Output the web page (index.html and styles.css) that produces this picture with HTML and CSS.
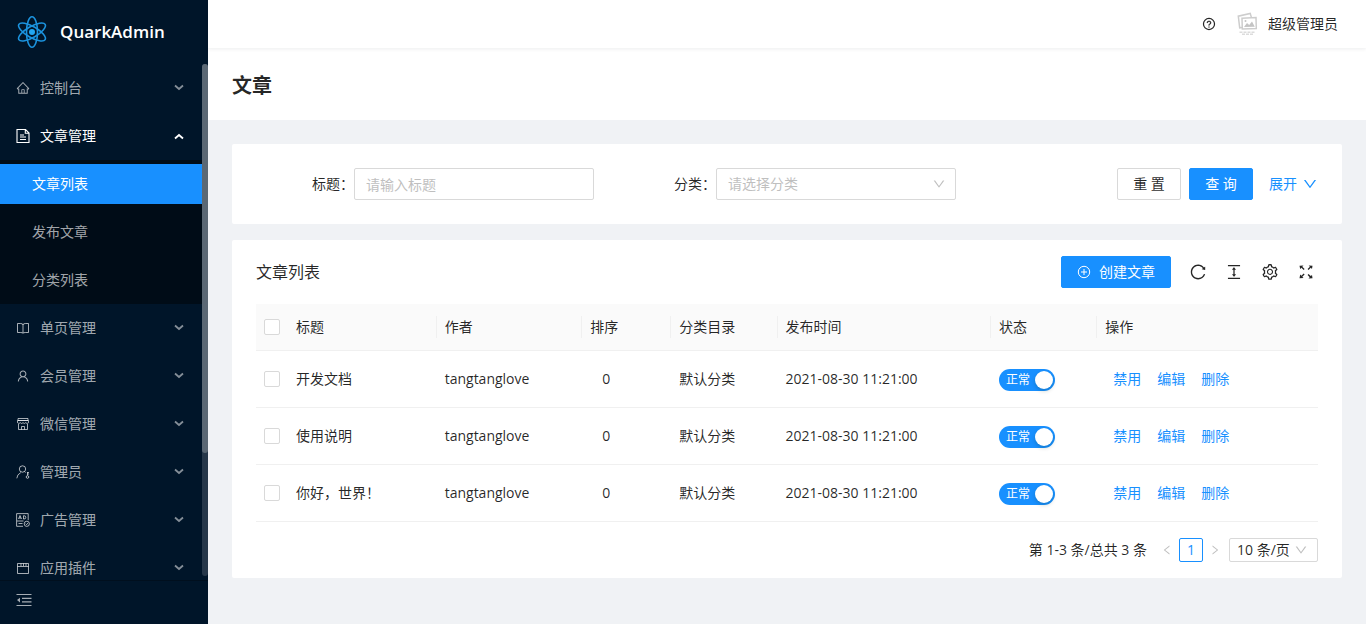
FILE: index.html
```html
<!DOCTYPE html>
<html lang="zh-CN">
<head>
<meta charset="utf-8">
<meta name="viewport" content="width=device-width, initial-scale=1">
<title>文章 - QuarkAdmin</title>
<link rel="stylesheet" href="styles.css">
</head>
<body>
<svg class="sprite" aria-hidden="true">
  <symbol id="i-down" viewBox="0 0 1024 1024"><path d="M884 256h-75c-5.100 0-9.900 2.500-12.900 6.600L512 654.200 227.900 262.600c-3-4.100-7.800-6.600-12.900-6.600h-75c-6.500 0-10.300 7.400-6.500 12.700l352.600 486.100c12.800 17.600 39 17.600 51.700 0l352.600-486.100c3.900-5.300.1-12.700-6.400-12.700z"/></symbol>
  <symbol id="i-left" viewBox="0 0 1024 1024"><path d="M724 218.300V141c0-6.700-7.700-10.400-12.900-6.300L260.300 486.800a31.860 31.860 0 0 0 0 50.300l450.800 352.100c5.300 4.100 12.900.4 12.900-6.300v-77.300c0-4.900-2.300-9.600-6.100-12.600l-360-281 360-281.100c3.800-3 6.100-7.700 6.100-12.600z"/></symbol>
  <symbol id="i-chevron" viewBox="0 0 10 10"><path d="M1 2.500l4 3.500L9 2.500" fill="none" stroke="currentColor" stroke-width="1.800"/></symbol>
</svg>
<div class="app">
  <aside class="sider">
    <a class="brand" href="#">
      <svg class="brand-logo" viewBox="0 0 32 32" fill="none" stroke="#1b93de" stroke-width="1.600">
        <ellipse cx="16" cy="16" rx="5.500" ry="15.200"/>
        <ellipse cx="16" cy="16" rx="5.500" ry="15.200" transform="rotate(60 16 16)"/>
        <ellipse cx="16" cy="16" rx="5.500" ry="15.200" transform="rotate(-60 16 16)"/>
        <circle cx="16" cy="16" r="3" fill="#22a7f2" stroke="none"/>
      </svg>
      <span class="brand-name">QuarkAdmin</span>
    </a>
    <div class="menu-area">
      <nav class="menu">
        <a class="menu-item" href="#">
          <svg class="icon" viewBox="0 0 1024 1024"><path d="M946.500 505L534.200 92.900a31.500 31.500 0 0 0-44.400 0L77.500 505a63.900 63.900 0 0 0-18.800 46c.4 35.200 29.700 63.300 64.900 63.300h42.500V940h691.800V614.300h43.400c17.100 0 33.200-6.700 45.300-18.800a63.600 63.600 0 0 0 18.700-45.300c0-17-6.700-33.100-18.800-45.200zM568 868H456V664h112v204zm217.900-325.700V868H632V640c0-22.100-17.900-40-40-40H432c-22.100 0-40 17.900-40 40v228H238.100V542.300h-96l370-369.700 369.900 369.700h-96.100z"/></svg>
          <span>控制台</span><svg class="arrow"><use href="#i-chevron"/></svg></a>
        <a class="menu-item is-open" href="#">
          <svg class="icon line" viewBox="0 0 14 14"><path d="M1 .500h8.500l3.500 3.500v9.500H1zM9.300.600v3.700H13M4 6h4M4 8h6M4 10.500h6" stroke-width="1.100"/></svg>
          <span>文章管理</span><svg class="arrow"><use href="#i-chevron"/></svg></a>
        <div class="submenu">
          <a class="submenu-item is-selected" href="#">文章列表</a>
          <a class="submenu-item" href="#">发布文章</a>
          <a class="submenu-item" href="#">分类列表</a>
        </div>
        <a class="menu-item" href="#">
          <svg class="icon line" viewBox="0 0 14 14"><path d="M1.500 2.500h3.200q2.300 0 2.300 1.500 0-1.500 2.300-1.500h3.200v9H9.300Q7.500 11.500 7 12.400q-.5-.9-2.300-.9H1.500zM7 4v8"/></svg>
          <span>单页管理</span><svg class="arrow"><use href="#i-chevron"/></svg></a>
        <a class="menu-item" href="#">
          <svg class="icon" viewBox="0 0 1024 1024"><path d="M858.500 763.600a374 374 0 0 0-80.600-119.500 375.630 375.630 0 0 0-119.500-80.600c-.4-.2-.8-.3-1.200-.5C719.500 518 760 444.700 760 362c0-137-111-248-248-248S264 225 264 362c0 82.700 40.500 156 102.800 201.100-.4.2-.8.3-1.200.5-44.800 18.900-85 46-119.500 80.600a375.630 375.630 0 0 0-80.600 119.500A371.700 371.700 0 0 0 136 901.800a8 8 0 0 0 8 8.200h60c4.400 0 7.900-3.500 8-7.800 2-77.200 33-149.500 87.800-204.300 56.700-56.700 132-87.900 212.200-87.900s155.500 31.200 212.200 87.900C779 752.700 810 825 812 902.200c.1 4.400 3.600 7.800 8 7.800h60a8 8 0 0 0 8-8.200c-1-47.800-10.900-94.300-29.500-138.200zM512 534c-45.900 0-89.100-17.900-121.600-50.400S340 407.900 340 362c0-45.900 17.900-89.100 50.400-121.600S466.100 190 512 190s89.100 17.900 121.600 50.400S684 316.100 684 362c0 45.900-17.900 89.100-50.400 121.600S557.900 534 512 534z"/></svg>
          <span>会员管理</span><svg class="arrow"><use href="#i-chevron"/></svg></a>
        <a class="menu-item" href="#">
          <svg class="icon line" viewBox="0 0 14 14"><path d="M2 1.500h10v2H2zM1.500 3.500h11v2.200q-1.400 1.600-2.800 0-1.400 1.600-2.700 0-1.400 1.600-2.700 0-1.400 1.600-2.800 0zM2.500 7v5.500h9V7M5.500 12.500v-3h3v3"/></svg>
          <span>微信管理</span><svg class="arrow"><use href="#i-chevron"/></svg></a>
        <a class="menu-item" href="#">
          <svg class="icon line" viewBox="0 0 14 14"><circle cx="6.500" cy="4" r="3.200"/><path d="M.8 13.300q.3-4 4-5.700M8.500 6.600l1 1M11.500 7v3.500M11.500 7.500H13M11.500 9H13"/><circle cx="11.500" cy="12" r="1.300"/></svg>
          <span>管理员</span><svg class="arrow"><use href="#i-chevron"/></svg></a>
        <a class="menu-item" href="#">
          <svg class="icon line" viewBox="0 0 14 14"><path d="M7 13.300H.6V.6h11.600v6.600M2.500 6L4 2.500 5.500 6M3 5h2M7.500 2.700V6H8q1.800 0 1.800-1.600T8 2.700zM1 8h6.500M2.500 10.500h4"/><circle cx="10.800" cy="10.800" r="2.600"/><path d="M9.700 10.700l.9.900 1.500-1.700"/></svg>
          <span>广告管理</span><svg class="arrow"><use href="#i-chevron"/></svg></a>
        <a class="menu-item" href="#">
          <svg class="icon line" viewBox="0 0 14 14"><path d="M1.500 2.500h11v10h-11zM1.500 5.500h11M5 2.500V5M7.500 2.500V5M10 2.500V5"/></svg>
          <span>应用插件</span><svg class="arrow"><use href="#i-chevron"/></svg></a>
      </nav>
      <div class="scroll-track"><div class="scroll-thumb"></div></div>
    </div>
    <div class="sider-foot">
      <button class="collapse" type="button" aria-label="收起菜单">
        <svg class="icon-16" viewBox="0 0 16 16"><path d="M.500 2h15v1.100H.5zM6 5.800h9.500v1.100H6zM6 9.300h9.500v1.100H6zM.5 13h15v1.100H.5zM1 8.100l3-2.300v4.600z"/></svg>
      </button>
    </div>
  </aside>
  <div class="main">
    <header class="topbar">
      <a class="help" href="#" aria-label="帮助">
        <svg class="icon" viewBox="0 0 1024 1024"><circle cx="512" cy="512" r="405" fill="none" stroke="currentColor" stroke-width="90"/><path stroke="currentColor" stroke-width="16" d="M623.600 316.700C593.600 290.400 554 276 512 276s-81.600 14.500-111.600 40.700C369.200 344 352 380.700 352 420v7.600c0 4.400 3.600 8 8 8h48c4.400 0 8-3.600 8-8V420c0-44.100 43.100-80 96-80s96 35.900 96 80c0 31.100-22 59.600-56.100 72.700-21.200 8.100-39.200 22.300-52.100 40.900-13.100 19-19.900 41.800-19.900 64.900V620c0 4.400 3.600 8 8 8h48c4.400 0 8-3.600 8-8v-22.700a48.300 48.300 0 0 1 30.900-44.800c59-22.700 97.100-74.700 97.100-132.500.1-39.300-17.100-76-48.300-103.300zM472 732a40 40 0 1 0 80 0 40 40 0 1 0-80 0z"/></svg>
      </a>
      <a class="account" href="#">
        <svg class="avatar" viewBox="0 0 24 24" fill="none" stroke="#cdcdcd" stroke-width="1.500">
          <path d="M6 15.500l-2.300.3L2.300 4.200 14.200 1.400l1.200 4"/>
          <path d="M6 6.200l14-.7.3 11-14 .5z" fill="#fff"/>
          <path d="M8 15l3-4 2.200 2 2.800-3.500 2.800 5.300z" fill="#c4c4c4" stroke="none"/>
          <circle cx="9.500" cy="9" r="1" fill="#c4c4c4" stroke="none"/>
          <path d="M3.500 20.200h16M6 22.300h11" stroke="#dcdcdc" stroke-dasharray="3 1"/>
        </svg>
        <span>超级管理员</span>
      </a>
    </header>
    <div class="page-head"><h1>文章</h1></div>
    <main class="content">
      <form class="card search">
        <div class="field">
          <label for="title">标题：</label>
          <input class="control" id="title" type="text" placeholder="请输入标题">
        </div>
        <div class="field">
          <label for="category">分类：</label>
          <div class="select-box">
            <select class="control" id="category"><option>请选择分类</option></select>
            <svg class="caret"><use href="#i-down"/></svg>
          </div>
        </div>
        <div class="search-actions">
          <button class="btn" type="reset">重 置</button>
          <button class="btn primary" type="button">查 询</button>
          <a class="expand" href="#">展开<svg class="icon-16"><use href="#i-down"/></svg></a>
        </div>
      </form>
      <section class="card list">
        <div class="toolbar">
          <h2>文章列表</h2>
          <button class="btn primary create" type="button">
            <svg class="icon" viewBox="0 0 14 14" fill="none" stroke="currentColor"><circle cx="7" cy="7" r="5.700"/><path d="M7 4v6M4 7h6"/></svg>
            创建文章</button>
          <button class="tool" type="button" aria-label="刷新"><svg class="icon-18" viewBox="0 0 1024 1024"><path d="M909.100 209.300l-56.400 44.100C775.800 155.100 656.200 92 521.900 92 290 92 102.300 279.500 102 511.500 101.700 743.700 289.800 932 521.900 932c181.300 0 335.800-115 394.600-276.100 1.500-4.200-.7-8.900-4.900-10.300l-56.700-19.500a8 8 0 0 0-10.100 4.800c-1.800 5-3.800 10-5.900 14.900-17.300 41-42.100 77.800-73.700 109.400A344.770 344.770 0 0 1 655.900 829c-42.300 17.900-87.400 27-133.800 27-46.500 0-91.500-9.100-133.800-27A341.500 341.500 0 0 1 279 755.200a342.160 342.160 0 0 1-73.700-109.400c-17.900-42.400-27-87.400-27-133.900s9.100-91.500 27-133.900c17.300-41 42.100-77.800 73.700-109.400 31.600-31.600 68.400-56.400 109.300-73.800 42.300-17.900 87.400-27 133.800-27 46.500 0 91.500 9.100 133.800 27a341.500 341.500 0 0 1 109.300 73.800c9.900 9.900 19.200 20.400 27.800 31.400l-60.200 47a8 8 0 0 0 3 14.100l175.600 43c5 1.200 9.900-2.600 9.900-7.700l.8-180.900c-.1-6.600-7.800-10.300-13-6.200z"/></svg></button>
          <button class="tool" type="button" aria-label="密度"><svg class="icon-18" viewBox="0 0 1024 1024"><path d="M168 840h688v76H168zM168 108h688v76H168zM610.800 378c6 0 9.400-7 5.700-11.700L515.700 238.700a7.140 7.140 0 0 0-11.300 0L403.600 366.300a7.230 7.230 0 0 0 5.700 11.700H476v268h-62.800c-6 0-9.400 7-5.700 11.700l100.800 127.500c2.900 3.700 8.500 3.700 11.300 0l100.800-127.500c3.700-4.700.4-11.700-5.700-11.700H548V378h62.800z"/></svg></button>
          <button class="tool" type="button" aria-label="列设置"><svg class="icon-18" viewBox="0 0 1024 1024"><path d="M924.800 625.700l-65.500-56c3.100-19 4.700-38.400 4.700-57.800s-1.600-38.800-4.700-57.800l65.500-56a32.030 32.030 0 0 0 9.300-35.200l-.9-2.600a443.740 443.740 0 0 0-79.700-137.900l-1.800-2.100a32.120 32.120 0 0 0-35.100-9.500l-81.300 28.900c-30-24.600-63.500-44-99.700-57.600l-15.700-85a32.050 32.050 0 0 0-25.800-25.700l-2.700-.5c-52.100-9.400-106.900-9.400-159 0l-2.700.5a32.050 32.050 0 0 0-25.800 25.700l-15.800 85.400a351.860 351.860 0 0 0-99 57.400l-81.900-29.100a32 32 0 0 0-35.100 9.500l-1.800 2.100a446.020 446.020 0 0 0-79.700 137.900l-.9 2.600c-4.500 12.500-.8 26.500 9.300 35.200l66.300 56.600c-3.100 18.800-4.600 38-4.600 57.100 0 19.200 1.500 38.400 4.600 57.100L99 625.500a32.030 32.030 0 0 0-9.300 35.200l.9 2.600c18.100 50.400 44.900 96.900 79.700 137.900l1.800 2.100a32.120 32.120 0 0 0 35.100 9.500l81.900-29.100c29.800 24.500 63.100 43.900 99 57.400l15.800 85.400a32.050 32.050 0 0 0 25.800 25.700l2.700.5a449.400 449.400 0 0 0 159 0l2.700-.5a32.050 32.050 0 0 0 25.800-25.700l15.700-85a350 350 0 0 0 99.700-57.600l81.300 28.900a32 32 0 0 0 35.100-9.500l1.800-2.100c34.800-41.100 61.600-87.500 79.700-137.900l.9-2.600c4.500-12.300.8-26.300-9.300-35zM788.300 465.900c2.500 15.100 3.800 30.600 3.800 46.100s-1.300 31-3.800 46.100l-6.600 40.100 74.700 63.900a370.030 370.030 0 0 1-42.600 73.600L721 702.800l-31.400 25.800c-23.900 19.600-50.500 35-79.300 45.800l-38.100 14.300-17.900 97a377.500 377.500 0 0 1-85 0l-17.900-97.200-37.800-14.500c-28.500-10.800-55-26.200-78.700-45.700l-31.400-25.900-93.400 33.200c-17-22.900-31.200-47.600-42.600-73.600l75.500-64.500-6.500-40c-2.400-14.900-3.700-30.300-3.700-45.500 0-15.300 1.200-30.600 3.700-45.500l6.500-40-75.500-64.500c11.300-26.100 25.600-50.700 42.600-73.600l93.400 33.200 31.400-25.900c23.700-19.500 50.200-34.900 78.700-45.700l37.900-14.300 17.900-97.200c28.100-3.200 56.800-3.200 85 0l17.900 97 38.100 14.300c28.700 10.800 55.400 26.200 79.300 45.800l31.400 25.800 92.800-32.900c17 22.900 31.200 47.600 42.600 73.600L781.800 426l6.500 39.900zM512 326c-97.200 0-176 78.800-176 176s78.800 176 176 176 176-78.800 176-176-78.800-176-176-176zm79.200 255.200A111.600 111.600 0 0 1 512 614c-29.900 0-58-11.700-79.200-32.800A111.600 111.600 0 0 1 400 502c0-29.900 11.700-58 32.800-79.200C454 401.600 482.100 390 512 390c29.900 0 58 11.600 79.200 32.800A111.600 111.600 0 0 1 624 502c0 29.900-11.700 58-32.800 79.200z"/></svg></button>
          <button class="tool" type="button" aria-label="全屏"><svg class="icon-18" viewBox="0 0 18 18"><path d="M2.500 2.800l4-.2-1.200 1.200 2.300 2.300-.9.900-2.300-2.300-1.200 1.200zM15.500 2.800l-.5 3.100-1.200-1.200L11.500 7l-.9-.9 2.300-2.300-1.200-1.200zM2.500 15.200l.7-3.600 1.200 1.200 2.300-2.300.9.900-2.300 2.300 1.200 1.200zM15.500 15.200l-4 .2 1.200-1.200-2.100-2.300.9-.9 2.300 2.100 1.200-1.200z"/></svg></button>
        </div>
        <table class="table">
          <colgroup><col class="c-check"><col class="c-title"><col class="c-author"><col class="c-sort"><col class="c-cat"><col class="c-time"><col class="c-state"><col></colgroup>
          <thead>
            <tr><th><input class="check" type="checkbox" aria-label="全选"></th><th>标题</th><th>作者</th><th>排序</th><th>分类目录</th><th>发布时间</th><th>状态</th><th>操作</th></tr>
          </thead>
          <tbody>
            <tr><td><input class="check" type="checkbox" aria-label="选择 开发文档"></td><td>开发文档</td><td>tangtanglove</td><td class="sort">0</td><td>默认分类</td><td>2021-08-30 11:21:00</td>
              <td><label class="switch"><input type="checkbox" role="switch" checked><span>正常</span></label></td>
              <td><div class="row-actions"><a href="#">禁用</a><a href="#">编辑</a><a href="#">删除</a></div></td></tr>
            <tr><td><input class="check" type="checkbox" aria-label="选择 使用说明"></td><td>使用说明</td><td>tangtanglove</td><td class="sort">0</td><td>默认分类</td><td>2021-08-30 11:21:00</td>
              <td><label class="switch"><input type="checkbox" role="switch" checked><span>正常</span></label></td>
              <td><div class="row-actions"><a href="#">禁用</a><a href="#">编辑</a><a href="#">删除</a></div></td></tr>
            <tr><td><input class="check" type="checkbox" aria-label="选择 你好，世界！"></td><td>你好，世界！</td><td>tangtanglove</td><td class="sort">0</td><td>默认分类</td><td>2021-08-30 11:21:00</td>
              <td><label class="switch"><input type="checkbox" role="switch" checked><span>正常</span></label></td>
              <td><div class="row-actions"><a href="#">禁用</a><a href="#">编辑</a><a href="#">删除</a></div></td></tr>
          </tbody>
        </table>
        <div class="pager">
          <span class="total">第 1-3 条/总共 3 条</span>
          <button class="step" type="button" aria-label="上一页" disabled><svg><use href="#i-left"/></svg></button>
          <button class="page" type="button">1</button>
          <button class="step next" type="button" aria-label="下一页" disabled><svg><use href="#i-left"/></svg></button>
          <div class="select-box size">
            <select class="control" aria-label="每页条数"><option>10 条/页</option></select>
            <svg class="caret"><use href="#i-down"/></svg>
          </div>
        </div>
      </section>
    </main>
  </div>
</div>
</body>
</html>
```

FILE: styles.css
```css
* { box-sizing: border-box; }

body {
  margin: 0;
  background: #f0f2f5;
  color: rgba(0, 0, 0, 0.85);
  font: 14px/22px "Open Sans", "Noto Sans CJK SC", sans-serif;
}

a { color: #1890ff; text-decoration: none; }
button, input, select { font: inherit; color: inherit; margin: 0; }
button { cursor: pointer; }
h1, h2 { margin: 0; }
svg { display: block; fill: currentColor; }

.sprite { position: absolute; width: 0; height: 0; }
.icon { width: 14px; height: 14px; flex: none; }
.icon-16 { width: 16px; height: 16px; }
.icon-18 { width: 18px; height: 18px; }
.line { fill: none; stroke: currentColor; }

.app { display: flex; min-height: 100vh; }

/* Sidebar */
.sider {
  position: sticky;
  top: 0;
  display: flex;
  flex-direction: column;
  flex: none;
  width: 208px;
  height: 100vh;
  background: #001529;
  color: rgba(255, 255, 255, 0.65);
}
.brand { display: flex; align-items: center; gap: 12px; flex: none; height: 64px; padding: 0 16px; }
.brand-logo { width: 32px; height: 32px; fill: none; }
.brand-name { color: #fff; font-size: 17px; font-weight: 600; line-height: 32px; }

.menu-area { display: flex; flex: 1; min-height: 0; }
.menu { flex: 1; overflow: hidden; }
.menu-item {
  display: flex;
  align-items: center;
  gap: 10px;
  height: 48px;
  padding: 0 18px 0 16px;
  color: inherit;
}
.menu-item.is-open { color: #fff; }
.arrow { width: 10px; height: 10px; margin-left: auto; opacity: 0.8; }
.is-open .arrow { transform: rotate(180deg); opacity: 1; }
.submenu { display: grid; gap: 8px; padding: 4px 0; background: #000c17; }
.submenu-item { height: 40px; padding-left: 32px; color: inherit; line-height: 40px; }
.submenu-item.is-selected { background: #1890ff; color: #fff; }

.scroll-track { width: 6px; border-radius: 3px; background: #263749; }
.scroll-thumb { height: 76%; border-radius: 3px; background: #5b6874; }

.sider-foot { flex: none; height: 48px; padding-top: 4px; }
.collapse {
  display: flex;
  align-items: center;
  width: 100%;
  height: 38px;
  padding: 0 16px;
  border: 0;
  border-top: 1px solid #000f1e;
  background: none;
}

/* Main column */
.main { flex: 1; min-width: 0; }
.topbar {
  position: relative;
  display: flex;
  align-items: center;
  justify-content: flex-end;
  gap: 20px;
  height: 48px;
  padding: 0 28px;
  background: #fff;
  box-shadow: 0 1px 4px rgba(0, 21, 41, 0.08);
}
.help, .account { color: rgba(0, 0, 0, 0.85); }
.account { display: flex; align-items: center; gap: 8px; }
.avatar { width: 24px; height: 24px; fill: none; }
.page-head { padding: 22px 24px 18px; background: #fff; }
.page-head h1 { font-size: 20px; font-weight: 600; line-height: 32px; }
.content { display: grid; gap: 16px; padding: 24px; }
.card { background: #fff; border-radius: 2px; }

/* Controls */
.control {
  width: 100%;
  min-width: 0;
  height: 32px;
  padding: 4px 11px;
  border: 1px solid #d9d9d9;
  border-radius: 2px;
  background: #fff;
  outline: 0;
  appearance: none;
}
.control::placeholder { color: #bfbfbf; }
.select-box { position: relative; }
.search select { color: #bfbfbf; }
.caret {
  position: absolute;
  top: 0;
  bottom: 0;
  right: 10px;
  width: 14px;
  height: 14px;
  margin: auto 0;
  color: #bfbfbf;
  pointer-events: none;
}
.btn {
  height: 32px;
  padding: 0 15px;
  border: 1px solid #d9d9d9;
  border-radius: 2px;
  background: #fff;
  white-space: nowrap;
}
.primary { border-color: #1890ff; background: #1890ff; color: #fff; }

/* Search form */
.search { display: grid; grid-template-columns: repeat(3, 1fr); gap: 24px; padding: 24px; }
.field { display: grid; grid-template-columns: 98px 1fr; align-items: center; }
.field label { text-align: right; }
.search-actions { display: flex; align-items: center; justify-content: flex-end; gap: 8px; }
.search-actions .btn { width: 64px; padding: 0; }
.expand { display: flex; align-items: center; gap: 5px; margin-left: 8px; }

/* Article list */
.list { padding: 0 24px 16px; }
.toolbar { display: flex; align-items: center; gap: 18px; height: 64px; padding-right: 3px; }
.toolbar h2 { margin-right: auto; font-size: 16px; font-weight: 400; line-height: 24px; }
.create { display: flex; align-items: center; gap: 8px; }
.create .icon { fill: none; }
.tool { padding: 0; border: 0; background: none; }

.table { width: 100%; border-spacing: 0; table-layout: fixed; }
.c-check { width: 32px; }
.c-title { width: 14%; }
.c-author { width: 13.7%; }
.c-sort { width: 8.4%; }
.c-cat { width: 10%; }
.c-time { width: 20.1%; }
.c-state { width: 10%; }
.table th, .table td { padding: 0 8px; border-bottom: 1px solid #f0f0f0; text-align: left; }
.table th {
  height: 47px;
  background: linear-gradient(#f0f0f0, #f0f0f0) right center / 1px 22px no-repeat #fafafa;
  font-weight: 400;
}
.table th:first-child, .table th:last-child { background: #fafafa; }
.table td { height: 57px; }
.table .sort { padding-left: 20px; }

.check {
  display: block;
  width: 16px;
  height: 16px;
  border: 1px solid #d9d9d9;
  border-radius: 2px;
  background: #fff;
  appearance: none;
}
.check:checked { border-color: #1890ff; background: #1890ff; }

.switch { position: relative; display: block; width: 56px; height: 22px; margin-top: 2px; }
.switch input {
  display: block;
  width: 56px;
  height: 22px;
  border-radius: 11px;
  background: #bfbfbf;
  appearance: none;
}
.switch input:checked { background: #1890ff; }
.switch input::before {
  content: "";
  display: block;
  width: 18px;
  height: 18px;
  margin: 0 2px;
  border-radius: 9px;
  background: #fff;
  box-shadow: 0 2px 4px rgba(0, 35, 11, 0.2);
  transform: translateY(2px);
}
.switch input:checked::before { margin-left: 36px; }
.switch span { position: absolute; top: 0; left: 7px; color: #fff; font-size: 12px; line-height: 22px; }

.row-actions { display: flex; gap: 16px; padding-left: 8px; }

/* Pagination */
.pager { display: flex; align-items: center; justify-content: flex-end; height: 24px; margin-top: 16px; }
.total { margin-right: 8px; }
.step, .page { width: 24px; height: 24px; padding: 0; border: 0; background: none; }
.step { display: grid; place-items: center; color: #bfbfbf; }
.step svg { width: 12px; height: 12px; }
.next svg { transform: scaleX(-1); }
.page { border: 1px solid #1890ff; border-radius: 2px; color: #1890ff; line-height: 22px; }
.size { margin-left: 2px; width: 89px; }
.size .control { height: 24px; padding: 0 7px; line-height: 22px; }
```
